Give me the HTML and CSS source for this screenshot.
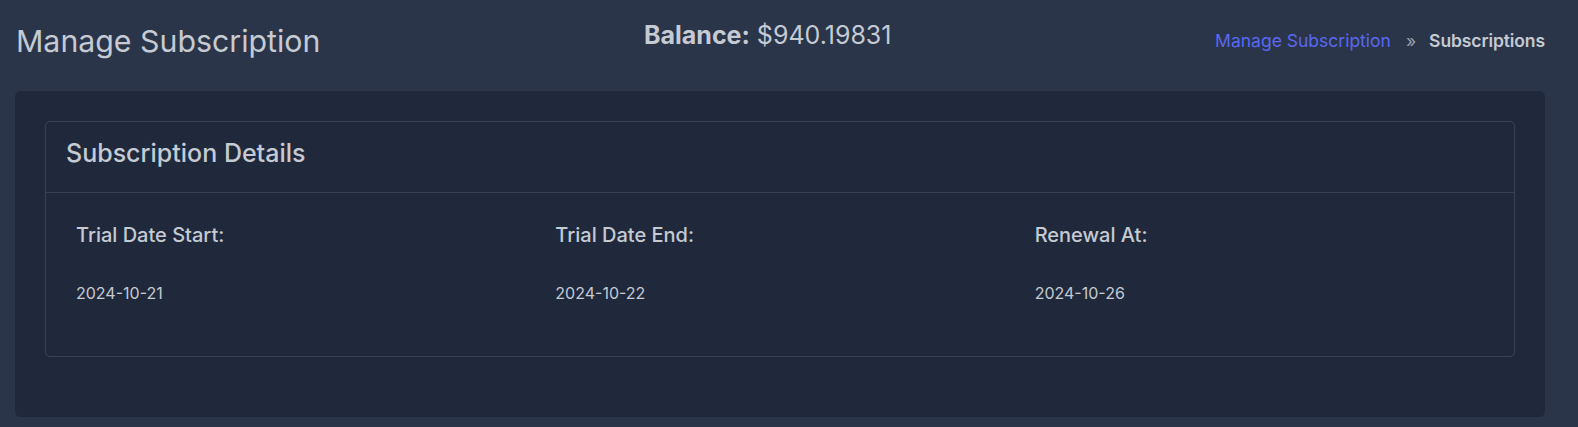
FILE: index.html
```html
<!DOCTYPE html>
<html lang="en">
<head>
<meta charset="utf-8">
<title>Manage Subscription</title>
<link rel="stylesheet" href="styles.css">
</head>
<body>
<header class="page-header">
  <h1 class="page-title">Manage Subscription</h1>
  <div class="balance"><strong>Balance:</strong> $940.19831</div>
  <nav class="breadcrumb">
    <a href="#" class="crumb-link">Manage Subscription</a>
    <span class="crumb-sep">»</span>
    <span class="crumb-current">Subscriptions</span>
  </nav>
</header>
<main class="panel">
  <section class="details-card">
    <div class="details-header">
      <h2 class="details-title">Subscription Details</h2>
    </div>
    <div class="details-body">
      <div class="field">
        <div class="field-label">Trial Date Start:</div>
        <div class="field-value">2024-10-21</div>
      </div>
      <div class="field">
        <div class="field-label">Trial Date End:</div>
        <div class="field-value">2024-10-22</div>
      </div>
      <div class="field">
        <div class="field-label">Renewal At:</div>
        <div class="field-value">2024-10-26</div>
      </div>
    </div>
  </section>
</main>
</body>
</html>
```

FILE: styles.css
```css
* { box-sizing: border-box; }
html, body { margin: 0; padding: 0; }
body {
  background: #2a3549;
  color: #c5cad3;
  font-family: Inter, "Noto Sans", sans-serif;
  width: 1578px;
  height: 427px;
  overflow: hidden;
}
.page-header {
  display: flex;
  justify-content: space-between;
  align-items: flex-start;
  padding: 0 33px 0 16px;
  height: 91px;
}
.page-title {
  margin: 23px 0 0;
  font-size: 30.3px;
  line-height: 36px;
  font-weight: 400;
}
.balance {
  margin: 21px 0 0;
  font-size: 25px;
  line-height: 29px;
}
.balance strong { font-weight: 700; }
.breadcrumb {
  margin: 31px 0 0;
  font-size: 17.5px;
  line-height: 20px;
  display: flex;
  align-items: center;
}
.crumb-link { color: #5b68f2; text-decoration: none; }
.crumb-sep { margin: 0 13px 0 15px; color: #9aa1ad; }
.crumb-current { font-weight: 600; letter-spacing: -0.1px; }
.panel {
  margin: 0 33px 0 15px;
  background: #1f293b;
  border-radius: 6px;
  padding: 30px 30px 61px;
  height: 326px;
}
.details-card {
  border: 1px solid #364256;
  border-radius: 5px;
}
.details-header {
  border-bottom: 1px solid #364256;
  padding: 14px 20px 22px;
  height: 71px;
}
.details-title {
  margin: 0;
  font-size: 25px;
  line-height: 34px;
  font-weight: 500;
}
.details-body {
  display: grid;
  grid-template-columns: repeat(3, 1fr);
  padding: 30px 15px 0;
  height: 163px;
}
.field { padding: 0 15px; }
.field-label {
  font-size: 20px;
  line-height: 24px;
  font-weight: 500;
  margin-bottom: 35px;
}
.field-value {
  font-size: 16px;
  line-height: 22px;
}
```
